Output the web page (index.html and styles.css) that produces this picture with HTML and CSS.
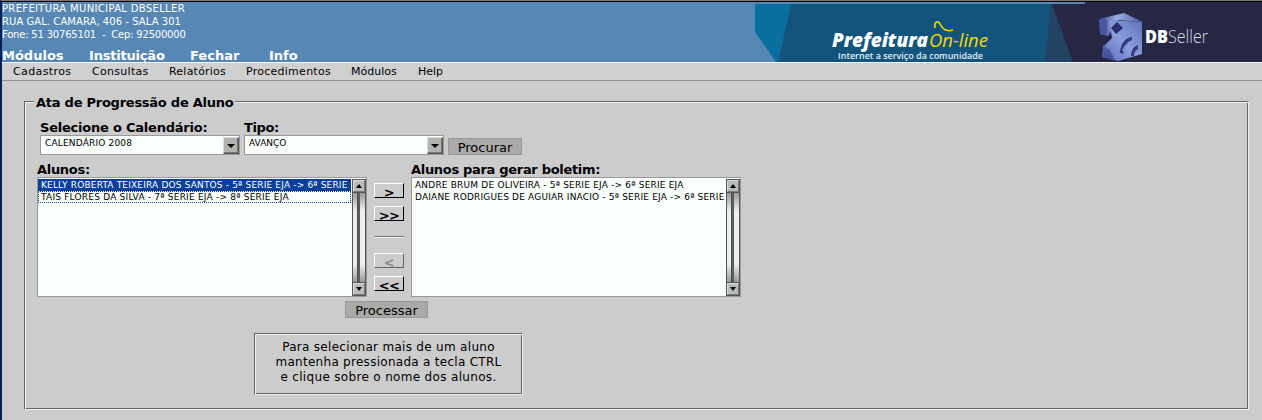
FILE: index.html
```html
<!DOCTYPE html>
<html lang="pt-BR">
<head>
<meta charset="utf-8">
<title>Prefeitura On-line</title>
<link rel="stylesheet" href="styles.css">
</head>
<body>
<div class="window">
  <header class="header">
    <div class="header-left">
      <p class="address"><span class="d1">PREFEITURA MUNICIPAL DBSELLER</span><br><span class="d2">RUA GAL. CAMARA, 406 - SALA 301</span><br><span class="d3">Fone: 51 30765101 &nbsp;- &nbsp;Cep: 92500000</span></p>
      <nav class="main-nav"><span class="n1">Módulos</span><span class="n2">Instituição</span><span class="n3">Fechar</span><span class="n4">Info</span></nav>
    </div>
    <svg class="banner" width="507" height="60" viewBox="755 2 507 60">
      <defs>
        <linearGradient id="top" x1="0" y1="0" x2="1" y2="0">
          <stop offset="0" stop-color="#3a4187"/><stop offset=".4" stop-color="#97aee3"/><stop offset="1" stop-color="#4d5ba6"/>
        </linearGradient>
        <linearGradient id="face" x1="0" y1="1" x2="1" y2="0">
          <stop offset="0" stop-color="#5868b8"/><stop offset=".5" stop-color="#8ba0dc"/><stop offset="1" stop-color="#5d6eb8"/>
        </linearGradient>
        <linearGradient id="tail" x1="0" y1="0" x2="0" y2="1">
          <stop offset="0" stop-color="#5663ac"/><stop offset="1" stop-color="#434b98"/>
        </linearGradient>
      </defs>
      <rect x="755" y="2" width="507" height="60" fill="#5787b4"/>
      <path d="M755 4H792L778 62H776L755 32Z" fill="#0a6e9e"/>
      <path d="M791 4H1060V62H778Z" fill="#13547c"/>
      <path d="M1051 4H1060L1075 62H1045Z" fill="#234364"/>
      <path d="M1052 4H1085V2H1262V62H1073Z" fill="#262744"/>
      <text class="brand" x="832" y="47" textLength="96" lengthAdjust="spacingAndGlyphs">Prefeitura</text>
      <text class="online" x="929" y="47" textLength="59" lengthAdjust="spacingAndGlyphs">On-line</text>
      <path d="M935 28C934 22 938 20 940 24C943 30 947 32 953 30" fill="none" stroke="#f2d80a" stroke-width="1.6"/>
      <text class="tagline" x="838" y="58.500" textLength="145" lengthAdjust="spacingAndGlyphs">Internet a serviço da comunidade</text>
      <path d="M1099 19L1124 13L1143 22L1118 20L1108 36L1100 34Z" fill="url(#top)"/>
      <path d="M1099 20L1107 19L1107 35L1100 34Z" fill="#4b56a0"/>
      <path d="M1109 20L1142 22L1142 54L1118 61L1102 57L1104 46L1112 38Z" fill="url(#face)"/>
      <path d="M1103 45L1110 50L1115 60L1102 57Z" fill="url(#tail)"/>
      <path d="M1117 22L1123 28L1116 34L1111 28Z" fill="#2b2b70"/>
      <path d="M1120 53C1120 45 1125 37 1132 37L1132 41C1127 43 1124 48 1123 54Z" fill="#343b85"/>
      <path d="M1131 56C1131 51 1133 47 1138 45L1138 49C1135 51 1134 53 1134 56Z" fill="#343b85"/>
      <path d="M1123 51C1124 46 1128 42 1132 41" fill="none" stroke="#adc2ee" stroke-width="1"/>
      <text class="db" x="1145" y="43" textLength="23" lengthAdjust="spacingAndGlyphs">DB</text>
      <text class="seller" x="1168" y="43" textLength="40" lengthAdjust="spacingAndGlyphs">Seller</text>
    </svg>
  </header>
  <nav class="menu"><span class="m1">Cadastros</span><span class="m2">Consultas</span><span class="m3">Relatórios</span><span class="m4">Procedimentos</span><span class="m5">Módulos</span><span class="m6">Help</span></nav>
  <main class="panel groove">
    <h1 class="legend"><span>Ata de Progressão de Aluno</span></h1>
    <div class="filters">
      <div class="field"><b class="lbl l1">Selecione o Calendário:</b>
        <div class="select"><span class="o1">CALENDÁRIO 2008</span><i class="drop"></i></div></div>
      <div class="field"><b class="lbl l2">Tipo:</b>
        <div class="select"><span class="o2">AVANÇO</span><i class="drop"></i></div></div>
      <button class="btn procurar">Procurar</button>
    </div>
    <div class="transfer">
      <div class="column"><b class="lbl l3">Alunos:</b>
        <div class="list"><ul>
          <li class="selected"><span class="a1">KELLY ROBERTA TEIXEIRA DOS SANTOS - 5ª SERIE EJA -&gt; 6ª SERIE</span></li>
          <li class="focused"><span class="a2">TAIS FLORES DA SILVA - 7ª SERIE EJA -&gt; 8ª SERIE EJA</span></li></ul>
          <div class="scroll"><i class="up"></i><i class="track"></i><i class="down"></i></div></div></div>
      <div class="moves">
        <button>&gt;</button><button>&gt;&gt;</button><hr><button class="off">&lt;</button><button>&lt;&lt;</button>
      </div>
      <div class="column"><b class="lbl l4">Alunos para gerar boletim:</b>
        <div class="list"><ul>
          <li><span class="a3">ANDRE BRUM DE OLIVEIRA - 5ª SERIE EJA -&gt; 6ª SERIE EJA</span></li>
          <li><span class="a4">DAIANE RODRIGUES DE AGUIAR INACIO - 5ª SERIE EJA -&gt; 6ª SERIE</span></li></ul>
          <div class="scroll"><i class="up"></i><i class="track"></i><i class="down"></i></div></div></div>
    </div>
    <button class="btn processar">Processar</button>
    <p class="hint groove"><span class="h1">Para selecionar mais de um aluno</span><br><span class="h2">mantenha pressionada a tecla CTRL</span><br><span class="h3">e clique sobre o nome dos alunos.</span></p>
  </main>
</div>
</body>
</html>
```
FILE: styles.css
```css
* { box-sizing: border-box; }
body { margin: 0; background: #ccc; font-family: "DejaVu Sans", sans-serif; font-size: 12px; color: #000; overflow: hidden; }
p, h1, ul { margin: 0; padding: 0; list-style: none; }
.window { height: 420px; border-left: 2px solid #00205a; border-top: 1px solid #777; background: #ccc; }
.header { display: flex; justify-content: space-between; height: 61px; border-top: 1px solid #000; background: #5787b4; color: #fff; }
.header-left { white-space: nowrap; }
.address { font-size: 10px; line-height: 13px; }
.d1 { letter-spacing: .34px; } .d2 { letter-spacing: .06px; } .d3 { letter-spacing: -.2px; }
.main-nav { display: flex; padding-top: 6px; font-weight: bold; font-size: 13px; line-height: 17px; }
.n1 { width: 87px; } .n2 { width: 101px; letter-spacing: -.2px; } .n3 { width: 79px; }
.banner { display: block; }
.brand, .online { font: italic 800 19px "Open Sans", sans-serif; fill: #fff; }
.online { font-weight: 500; fill: #f2d80a; }
.tagline { font: 600 9.5px "Open Sans", sans-serif; fill: #e2edf4; }
.db { font: 800 17px "Open Sans", sans-serif; fill: #fff; }
.seller { font: 300 18px "Open Sans", sans-serif; fill: #dadbe8; }
.menu { display: flex; height: 19px; padding-left: 11px; border-top: 1px solid #f4f4f4; border-bottom: 1px solid #909090; background: #d0d0d0; font-size: 11px; line-height: 17px; }
.m1 { width: 79px; letter-spacing: .38px; } .m2 { width: 77px; letter-spacing: .3px; } .m3 { width: 77px; letter-spacing: .22px; } .m4 { width: 105px; letter-spacing: .26px; } .m5 { width: 67px; }
.groove { border: 1px solid; border-color: #666 #eee #eee #666; box-shadow: inset 1px 1px #eee, inset -1px -1px #666; }
.panel { width: 1225px; height: 309px; margin: 20px 0 0 22px; padding-left: 12px; }
.legend { height: 18px; margin: -8px 0 0 -3px; font-size: 13px; line-height: 17px; letter-spacing: -.25px; }
.legend span { display: inline-block; padding: 0 2px; background: #ccc; }
.filters { display: flex; align-items: flex-end; gap: 4px; height: 43px; padding-left: 3px; }
.field { width: 200px; }
.lbl { display: block; height: 15px; font-size: 13px; line-height: 15px; white-space: nowrap; }
.l1 { letter-spacing: -.22px; } .l2 { letter-spacing: -.4px; } .l3 { letter-spacing: -.3px; } .l4 { letter-spacing: -.31px; }
.select { display: flex; justify-content: space-between; height: 20px; border: 1px solid #999; background: #fafffd; padding-left: 4px; font-size: 9px; line-height: 14px; }
.o1 { letter-spacing: .17px; }
.drop { width: 16px; height: 17px; margin-top: 1px; border: 1px solid; border-color: #ddd #555 #555 #ddd; box-shadow: inset -1px -1px #777; background: #b2b2ae; display: flex; align-items: center; justify-content: center; }
.drop::before { content: ""; border: 4px solid transparent; border-top-color: #000; border-bottom: 0; }
.btn { font: 13px "DejaVu Sans", sans-serif; border: 1px solid #999; background: #aaaaa8; padding: 0; height: 17px; line-height: 15px; display: block; }
.procurar { width: 74px; line-height: 17px; }
.transfer { display: flex; height: 135px; margin-top: 7px; }
.column { width: 330px; }
.list { display: flex; height: 120px; border: 1px solid #999; background: #fafffd; font-size: 9px; line-height: 12px; }
.list ul { width: 313px; padding-top: 1px; white-space: nowrap; overflow: hidden; }
.list li { height: 12px; padding-left: 3px; overflow: hidden; }
.a1 { letter-spacing: .165px; } .a2 { letter-spacing: .21px; } .a3 { letter-spacing: .19px; } .a4 { letter-spacing: .18px; }
.list .selected { background: #0a409c; color: #fff; }
.list .focused { border: 1px dotted #0a409c; padding-left: 2px; line-height: 10px; }
.scroll { display: flex; flex-direction: column; width: 14px; height: 117px; margin: 1px 0 0 1px; border: 1px solid #555; }
.up, .down { display: flex; align-items: center; justify-content: center; height: 12px; border: 1px solid; border-color: #ddd #777 #777 #ddd; background: #bbb; }
.up::before, .down::before { content: ""; border: 3px solid transparent; }
.up::before { border-top: 0; border-bottom: 4px solid #000; }
.down::before { border-bottom: 0; border-top: 4px solid #000; }
.track { flex: 1; border: solid #555; border-width: 1px 0; background: linear-gradient(90deg, transparent 4px, #333 4px, #666 5px, #555 7px, transparent 7px), linear-gradient(#999, #eee 20%, #eee 80%, #999); }
.moves { display: flex; flex-direction: column; width: 44px; padding: 21px 7px 0; }
.moves button { height: 15px; margin-bottom: 8px; padding: 4px 0 0; border: 1px solid; border-color: #fff #000 #000 #fff; background: #ccc; color: #000; font: bold 13px/9px "DejaVu Sans", sans-serif; letter-spacing: -.6px; }
.moves hr { width: 30px; height: 2px; margin: 7px 0 15px; border: 0; border-top: 1px solid #777; border-bottom: 1px solid #eee; }
.moves .off { color: #888; border-color: #fff #666 #666 #fff; }
.processar { width: 83px; margin: 4px 0 0 308px; line-height: 17px; }
.hint { width: 269px; height: 62px; margin: 15px 0 0 217px; padding-top: 6px; text-align: center; font-size: 12px; line-height: 15px; white-space: nowrap; }
.h1 { letter-spacing: .3px; } .h2 { letter-spacing: .28px; } .h3 { letter-spacing: .33px; }
```
